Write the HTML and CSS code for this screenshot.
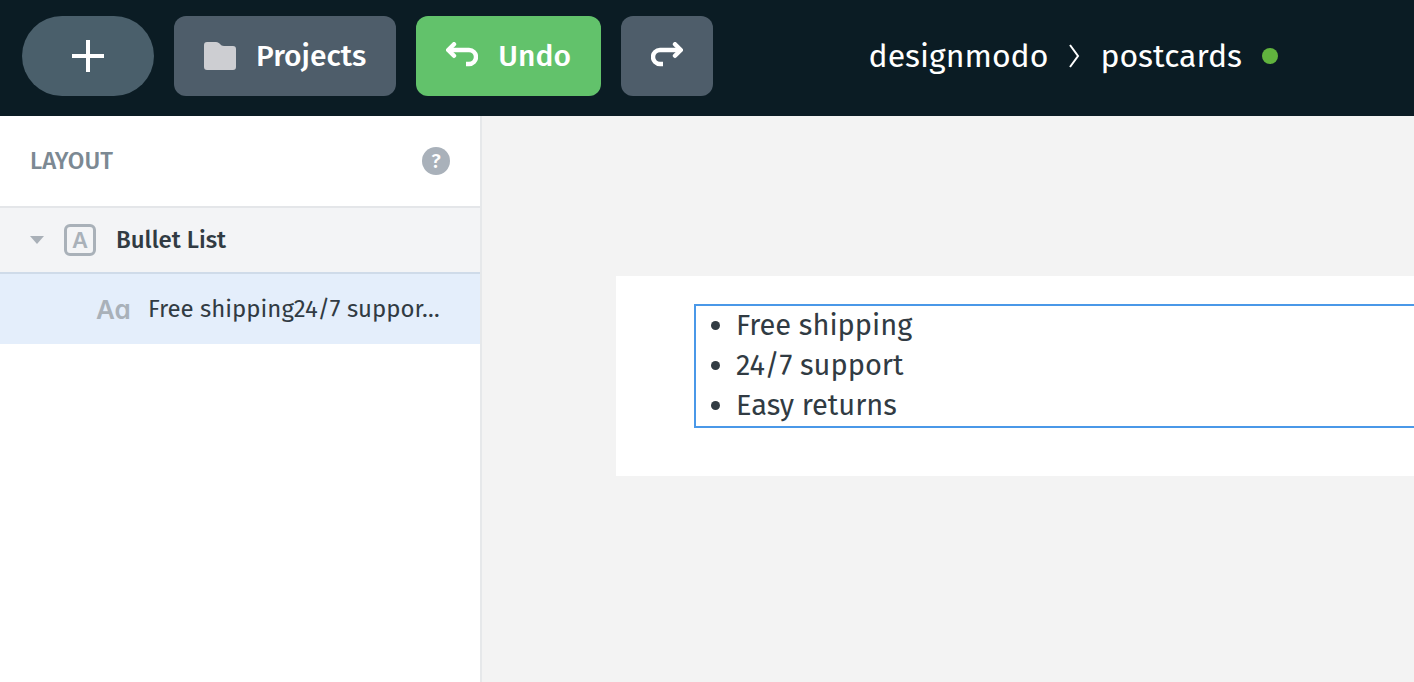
FILE: index.html
```html
<!DOCTYPE html>
<html lang="en">
<head>
    <meta charset="UTF-8">
    <meta name="viewport" content="width=device-width, initial-scale=1.0">
    <title>Postcards</title>
    <link rel="stylesheet" href="styles.css">
</head>
<body>
    <header class="topbar">
        <div class="toolbar">
            <button type="button" class="btn btn-add" aria-label="Add">
                <svg width="32" height="32" viewBox="0 0 32 32"><path d="M16 0v32M0 16h32" stroke="#fff" stroke-width="4"/></svg>
            </button>
            <button type="button" class="btn">
                <svg width="32" height="28" viewBox="0 0 32 28"><path d="M3 0h9c2 0 3 1 4 2s2 2 4 2h9a3 3 0 0 1 3 3v18a3 3 0 0 1-3 3H3a3 3 0 0 1-3-3V3a3 3 0 0 1 3-3z" fill="#cdced2"/></svg>
                Projects
            </button>
            <button type="button" class="btn btn-undo">
                <svg class="arrow" width="32" height="28" viewBox="0 0 32 28"><path d="M8 2.200L2.200 8L8 13.800" stroke-linecap="round"/><path d="M3 8h20a7 7 0 0 1 0 14h-3"/></svg>
                Undo
            </button>
            <button type="button" class="btn" aria-label="Redo">
                <svg class="arrow" width="32" height="28" viewBox="0 0 32 28"><path d="M24 2.200L29.800 8L24 13.800" stroke-linecap="round"/><path d="M29 8H9a7 7 0 0 0 0 14h3"/></svg>
            </button>
        </div>
        <nav class="breadcrumb">
            <a href="#">designmodo</a>
            <svg width="12" height="24" viewBox="0 0 12 24"><path d="M2 1l8 11-8 11" fill="none" stroke="#fff" stroke-width="2"/></svg>
            <a href="#">postcards</a>
            <span class="status"></span>
        </nav>
    </header>
    <div class="workspace">
        <aside class="sidebar">
            <div class="sidebar-header">
                <h2>LAYOUT</h2>
                <button type="button" class="help" aria-label="Help">?</button>
            </div>
            <div class="layer">
                <svg width="14" height="8" viewBox="0 0 14 8"><path d="M0 0h14L7 8z" fill="#a9b0b8"/></svg>
                <span class="layer-type">A</span>
                <span class="layer-name">Bullet List</span>
            </div>
            <div class="layer layer-child">
                <span class="text-type">Aa</span>
                <span>Free shipping24/7 suppor…</span>
            </div>
        </aside>
        <main class="canvas">
            <div class="email">
                <ul class="bullets">
                    <li>Free shipping</li>
                    <li>24/7 support</li>
                    <li>Easy returns</li>
                </ul>
            </div>
        </main>
    </div>
</body>
</html>
```
FILE: styles.css
```css
* {
    box-sizing: border-box;
}
body {
    margin: 0;
    min-height: 100vh;
    display: flex;
    flex-direction: column;
    overflow-x: hidden;
    font-family: "Fira Sans", "Noto Sans", sans-serif;
    color: #313b43;
}
.topbar {
    display: flex;
    align-items: center;
    justify-content: space-between;
    padding: 16px 136px 20px 22px;
    background-color: #0b1c24;
}
.toolbar {
    display: flex;
    gap: 20px;
}
.btn {
    display: flex;
    align-items: center;
    gap: 20px;
    height: 80px;
    padding: 0 30px;
    border: none;
    border-radius: 12px;
    background-color: #4e5d6a;
    color: #fff;
    font-family: inherit;
    font-size: 30px;
    font-weight: 500;
    cursor: pointer;
}
.btn-add {
    padding: 0 50px;
    border-radius: 40px;
    background-color: #4a5f6b;
}
.btn-undo {
    background-color: #62c26b;
}
.arrow {
    fill: none;
    stroke: #fff;
    stroke-width: 4.4;
    stroke-linejoin: round;
}
.breadcrumb {
    display: flex;
    align-items: center;
    gap: 20px;
}
.breadcrumb a {
    color: #fff;
    font-size: 32px;
    text-decoration: none;
}
.status {
    width: 16px;
    height: 16px;
    border-radius: 50%;
    background-color: #61b33e;
}
.workspace {
    flex: 1;
    display: flex;
}
.sidebar {
    width: 482px;
    flex-shrink: 0;
    border-right: 2px solid #e6e8ea;
    background-color: #fff;
}
.sidebar-header {
    display: flex;
    align-items: center;
    justify-content: space-between;
    height: 90px;
    padding: 0 30px;
}
.sidebar-header h2 {
    margin: 0;
    color: #7c8993;
    font-size: 24px;
    font-weight: 500;
}
.help {
    width: 28px;
    height: 28px;
    padding: 0;
    border: none;
    border-radius: 50%;
    background-color: #a9b1ba;
    color: #fff;
    font-family: inherit;
    font-size: 20px;
    font-weight: 500;
    line-height: 28px;
}
.layer {
    display: flex;
    align-items: center;
    gap: 20px;
    height: 66px;
    padding: 0 30px;
    border-top: 2px solid #e4e6e9;
    background-color: #f3f4f6;
    font-size: 24px;
    white-space: nowrap;
}
.layer-type {
    width: 32px;
    height: 32px;
    border: 3px solid #a9b1b9;
    border-radius: 6px;
    color: #a9b1b9;
    font-family: Inter, sans-serif;
    font-size: 22px;
    font-weight: 600;
    line-height: 26px;
    text-align: center;
}
.layer-name {
    font-weight: 500;
}
.layer-child {
    height: 72px;
    padding-left: 96px;
    border-top-color: #cfdbe9;
    background-color: #e4eefb;
}
.text-type {
    width: 32px;
    color: #a9b1b9;
    font-size: 26px;
    font-weight: 600;
    font-family: Inter, sans-serif;
    /* single-storey a */
    font-feature-settings: "cv11";
}
.canvas {
    flex: 1;
    padding: 160px 0 0 134px;
    background-color: #f3f3f3;
}
.email {
    height: 200px;
    padding: 28px 0 0 78px;
    background-color: #fff;
}
.bullets {
    margin: 0;
    padding: 0 0 0 40px;
    border: 2px solid #4a98e8;
    border-right: none;
    font-size: 29px;
    line-height: 40px;
}
```
